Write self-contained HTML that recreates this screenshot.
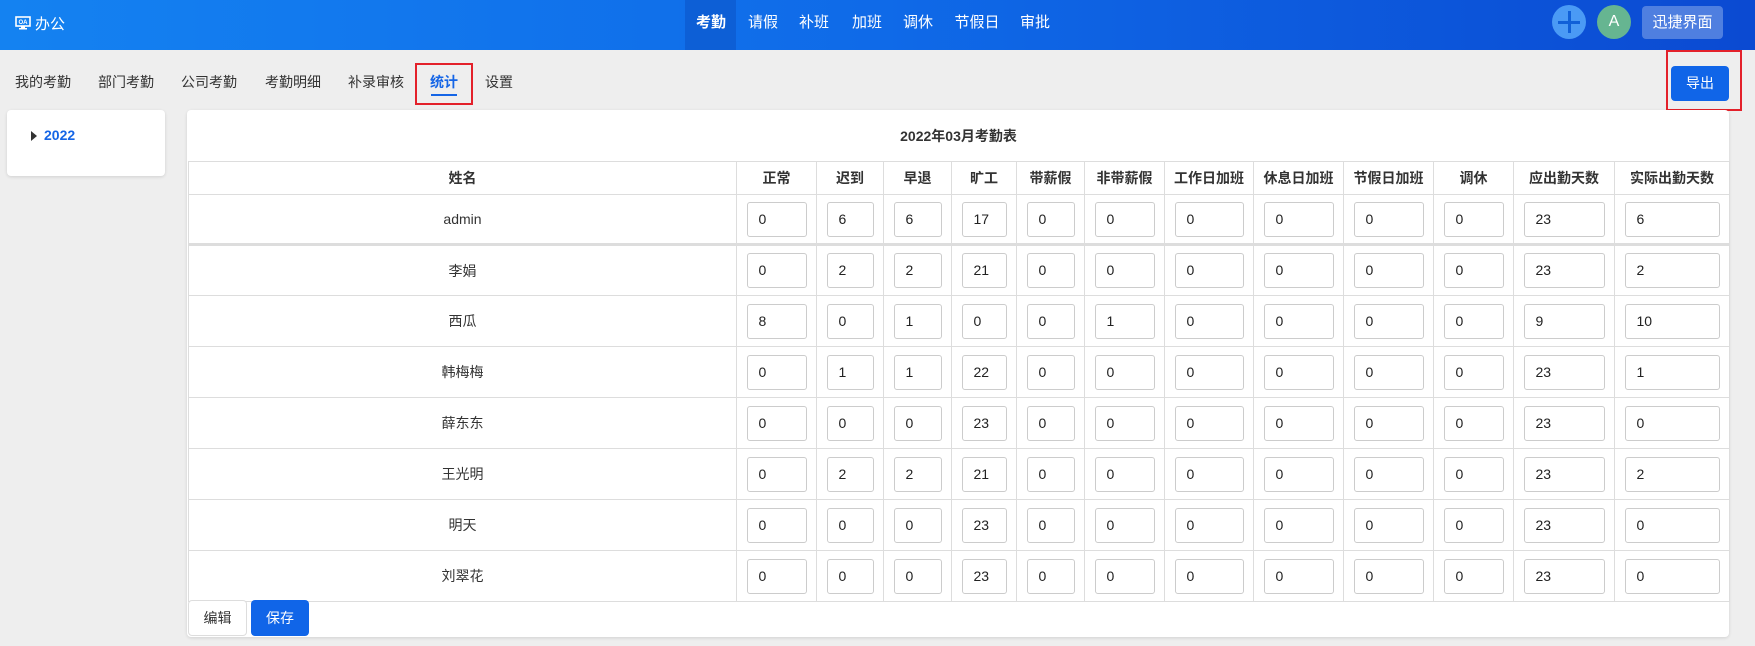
<!DOCTYPE html>
<html><head><meta charset="utf-8"><style>
*{box-sizing:border-box;margin:0;padding:0}
body{width:1755px;height:646px;background:#eeeeee;font-family:"Liberation Sans","Noto Sans CJK SC",sans-serif;color:#333;position:relative;overflow:hidden;font-size:14px}
.hdr{position:absolute;left:0;top:0;width:1755px;height:50px;background:linear-gradient(90deg,#1482f1,#0f6ae8 50%,#0b4ad2)}
.abs{position:absolute}
.nav{position:absolute;top:0;height:50px;line-height:44px;color:#fff;font-size:15px;transform:translateX(-50%)}
.sub{position:absolute;top:72px;font-size:14px;color:#333;transform:translateX(-50%)}
.card{position:absolute;background:#fff;border-radius:4px;box-shadow:0 1px 3px rgba(0,0,0,.12)}
table{position:absolute;left:188px;top:161px;border-collapse:collapse;table-layout:fixed;font-size:14px}
td,th{border:1px solid #ddd;text-align:center;padding:0}
th{height:33px;font-weight:bold;color:#333}
td{height:51px}
tr.first td{border-bottom:3px solid #ddd;height:50px}
.in{display:block;margin:0 auto;height:35px;border:1px solid #ccc;border-radius:3px;text-align:left;padding-left:11px;line-height:33px;color:#222}
</style></head><body>
<div class="hdr"></div>
<svg class="abs" style="left:15px;top:16px" width="16" height="14" viewBox="0 0 16 14"><rect x="1" y="1" width="14" height="9" fill="none" stroke="#fff" stroke-width="1.6"/><text x="8" y="8" font-size="6" fill="#fff" text-anchor="middle" font-family="Liberation Sans" font-weight="bold">OA</text><rect x="6" y="10" width="4" height="2" fill="#fff"/><rect x="4" y="12" width="8" height="1.5" fill="#fff"/></svg>
<div class="abs" style="left:35px;top:13px;color:#fff;font-size:15px">办公</div>
<div class="abs" style="left:685px;top:0;width:51px;height:50px;background:#0d5fd6"></div>
<div class="nav" style="left:711px;font-weight:bold;top:1px">考勤</div>
<div class="nav" style="left:763px;top:1px">请假</div>
<div class="nav" style="left:814px;top:1px">补班</div>
<div class="nav" style="left:867px;top:1px">加班</div>
<div class="nav" style="left:918px;top:1px">调休</div>
<div class="nav" style="left:977px;top:1px">节假日</div>
<div class="nav" style="left:1035px;top:1px">审批</div>
<div class="abs" style="left:1552px;top:5px;width:34px;height:34px;border-radius:50%;background:#4a9af5"></div>
<div class="abs" style="left:1558px;top:20.5px;width:22px;height:3px;background:#1060d8"></div>
<div class="abs" style="left:1567.5px;top:11px;width:3px;height:22px;background:#1060d8"></div>
<div class="abs" style="left:1597px;top:5px;width:34px;height:34px;border-radius:50%;background:#66b591;color:#fff;text-align:center;line-height:34px;font-size:16px">A</div>
<div class="abs" style="left:1642px;top:6px;width:81px;height:33px;border-radius:4px;background:#4f7fe0;color:#fff;text-align:center;line-height:33px;font-size:15px">迅捷界面</div>

<div class="sub" style="left:43px">我的考勤</div>
<div class="sub" style="left:126px">部门考勤</div>
<div class="sub" style="left:209px">公司考勤</div>
<div class="sub" style="left:293px">考勤明细</div>
<div class="sub" style="left:376px">补录审核</div>
<div class="sub" style="left:444px;color:#1565e6;font-weight:bold">统计</div>
<div class="abs" style="left:431px;top:94px;width:26px;height:2px;background:#1565e6"></div>
<div class="sub" style="left:499px">设置</div>
<div class="abs" style="left:415px;top:63px;width:58px;height:42px;border:2px solid #e3202a"></div>

<div class="abs" style="left:1671px;top:66px;width:58px;height:35px;background:#1065e8;border-radius:4px;color:#fff;text-align:center;line-height:35px;font-size:14px">导出</div>
<div class="abs" style="left:1666px;top:50px;width:76px;height:61px;border:2px solid #e3202a"></div>

<div class="card" style="left:7px;top:110px;width:158px;height:66px"></div>
<div class="abs" style="left:31px;top:131px;width:0;height:0;border-left:6px solid #333;border-top:5px solid transparent;border-bottom:5px solid transparent"></div>
<div class="abs" style="left:44px;top:127px;color:#1565e6;font-weight:bold;font-size:14px">2022</div>

<div class="card" style="left:187px;top:110px;width:1542px;height:527px"></div>
<div class="abs" style="left:188px;top:126px;width:1541px;text-align:center;font-weight:bold;font-size:14px">2022年03月考勤表</div>

<table>
<colgroup><col style="width:548px"><col style="width:80px"><col style="width:67px"><col style="width:68px"><col style="width:65px"><col style="width:68px"><col style="width:80px"><col style="width:89px"><col style="width:90px"><col style="width:90px"><col style="width:80px"><col style="width:101px"><col style="width:115px"></colgroup>
<tr><th>姓名</th><th>正常</th><th>迟到</th><th>早退</th><th>旷工</th><th>带薪假</th><th>非带薪假</th><th>工作日加班</th><th>休息日加班</th><th>节假日加班</th><th>调休</th><th>应出勤天数</th><th>实际出勤天数</th></tr>
<tbody id="tb"></tbody>
</table>
<script>
var rows=[["admin",0,6,6,17,0,0,0,0,0,0,23,6],["李娟",0,2,2,21,0,0,0,0,0,0,23,2],["西瓜",8,0,1,0,0,1,0,0,0,0,9,10],["韩梅梅",0,1,1,22,0,0,0,0,0,0,23,1],["薛东东",0,0,0,23,0,0,0,0,0,0,23,0],["王光明",0,2,2,21,0,0,0,0,0,0,23,2],["明天",0,0,0,23,0,0,0,0,0,0,23,0],["刘翠花",0,0,0,23,0,0,0,0,0,0,23,0]];
var w=[0,80,67,68,65,68,80,89,90,90,80,101,115],h="";
rows.forEach(function(r,i){h+='<tr'+(i==0?' class="first"':'')+'><td>'+r[0]+'</td>';for(var j=1;j<13;j++)h+='<td><span class="in" style="width:'+(w[j]-20)+'px">'+r[j]+'</span></td>';h+='</tr>';});
document.getElementById('tb').innerHTML=h;
</script>
<div class="abs" style="left:188px;top:600px;width:59px;height:36px;border:1px solid #ddd;border-radius:4px;background:#fff;text-align:center;line-height:34px">编辑</div>
<div class="abs" style="left:251px;top:600px;width:58px;height:36px;border-radius:4px;background:#1065e8;color:#fff;text-align:center;line-height:36px">保存</div>
</body></html>
